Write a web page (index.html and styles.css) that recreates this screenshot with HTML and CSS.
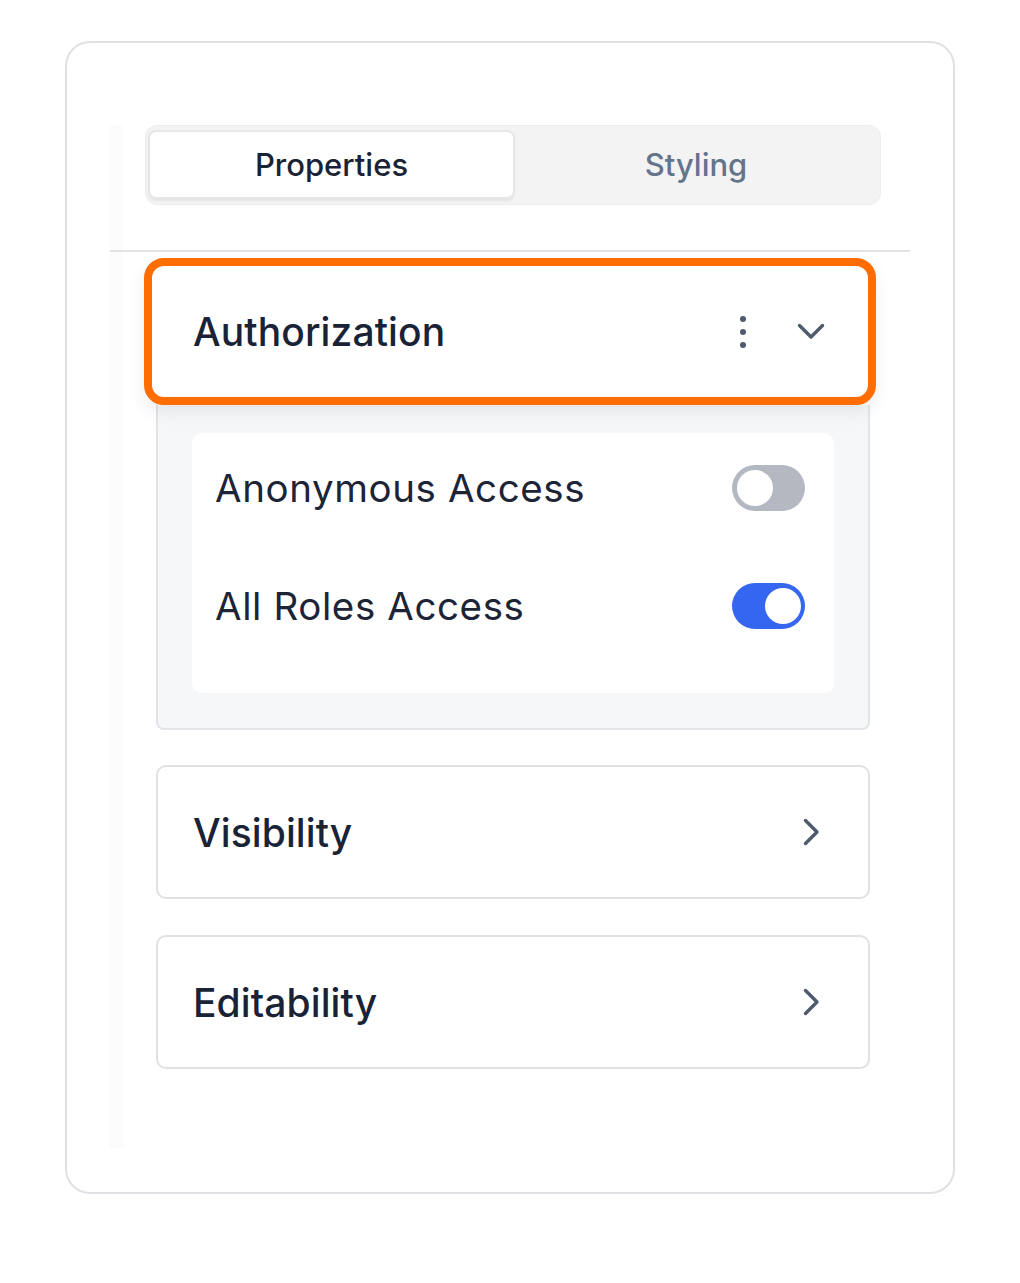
FILE: index.html
```html
<!DOCTYPE html>
<html>
<head>
<meta charset="utf-8">
<link rel="stylesheet" href="styles.css">
</head>
<body>
<div class="frame">
  <div class="panel">
    <div class="tabs">
      <div class="tab active">Properties</div>
      <div class="tab">Styling</div>
    </div>
    <div class="divider"></div>

    <div class="section-head focused">
      <span class="section-title">Authorization</span>
      <div class="head-icons">
        <svg class="kebab" width="24" height="34" viewBox="0 0 24 34"><circle cx="12" cy="4" r="3" fill="#4f5a6e"/><circle cx="12" cy="17" r="3" fill="#4f5a6e"/><circle cx="12" cy="30" r="3" fill="#4f5a6e"/></svg>
        <span class="icon-box"><svg width="28" height="17" viewBox="0 0 28 17"><path d="M2.5 2.5 L14 14 L25.5 2.5" fill="none" stroke="#4f5a6e" stroke-width="3.4" stroke-linecap="round" stroke-linejoin="round"/></svg></span>
      </div>
    </div>
    <div class="section-body">
      <div class="settings-card">
        <div class="setting-row">
          <span class="setting-label">Anonymous Access</span>
          <span class="toggle"><span class="knob"></span></span>
        </div>
        <div class="setting-row">
          <span class="setting-label">All Roles Access</span>
          <span class="toggle on"><span class="knob"></span></span>
        </div>
      </div>
    </div>

    <div class="section-card">
      <span class="section-title">Visibility</span>
      <span class="icon-box"><svg width="17" height="28" viewBox="0 0 17 28"><path d="M2.5 2.5 L14 14 L2.5 25.5" fill="none" stroke="#4f5a6e" stroke-width="3.4" stroke-linecap="round" stroke-linejoin="round"/></svg></span>
    </div>
    <div class="section-card">
      <span class="section-title">Editability</span>
      <span class="icon-box"><svg width="17" height="28" viewBox="0 0 17 28"><path d="M2.5 2.5 L14 14 L2.5 25.5" fill="none" stroke="#4f5a6e" stroke-width="3.4" stroke-linecap="round" stroke-linejoin="round"/></svg></span>
    </div>
  </div>
</div>
</body>
</html>
```

FILE: styles.css
```css
* { box-sizing: border-box; }
html, body { margin: 0; padding: 0; background: #ffffff; }
body {
  font-family: Inter, "Noto Sans", "Liberation Sans", sans-serif;
  color: #1a2236;
  width: 1020px;
  height: 1283px;
  overflow: hidden;
}
.frame {
  margin: 41px 0 0 65px;
  width: 890px;
  height: 1153px;
  border: 2px solid #e0e1e5;
  border-radius: 25px;
  padding: 82px 0 0 43px;
}
.panel {
  width: 800px;
  height: 1023px;
  background: linear-gradient(to right, #fbfbfc 0, #fcfcfd 12px, #ffffff 13px);
}
.tabs {
  margin-left: 35px;
  width: 736px;
  height: 80px;
  background: #f3f3f4;
  border: 1px solid #ededef;
  border-radius: 12px;
  padding: 4px 366px 5px 2px;
  display: flex;
}
.tab {
  flex: 1;
  display: flex;
  align-items: center;
  justify-content: center;
  font-size: 31px;
  font-weight: 500;
  color: #64748b;
}
.tab.active {
  flex: 0 0 367px;
  background: #ffffff;
  border: 2px solid #e6e6e8;
  border-radius: 8px;
  box-shadow: 0 2px 2px rgba(0,0,0,0.06);
  color: #1a2236;
}
.tab:not(.active) {
  flex: 0 0 362px;
  margin-right: -362px;
}
.divider {
  margin-top: 45px;
  height: 2px;
  background: #e1e3e7;
}
.section-head {
  position: relative;
  z-index: 1;
  margin: 6px 0 0 34px;
  width: 732px;
  height: 147px;
  border: 8px solid #ff6d00;
  border-radius: 20px;
  background: #ffffff;
  box-shadow: 0 8px 18px rgba(0,0,0,0.07);
  display: flex;
  align-items: center;
  justify-content: space-between;
  padding: 0 43px 0 41px;
}
.section-title {
  font-size: 39px;
  font-weight: 500;
  color: #1a2236;
  letter-spacing: 0.1px;
}
.head-icons {
  display: flex;
  align-items: center;
  gap: 42px;
}
.kebab { display: block; }
.icon-box {
  width: 28px;
  height: 28px;
  display: flex;
  align-items: center;
  justify-content: center;
}
.icon-box svg { display: block; }
.section-body {
  margin-left: 46px;
  width: 714px;
  height: 325px;
  background: #f6f7f9;
  border: 2px solid #e2e4e8;
  border-top: none;
  border-radius: 0 0 8px 8px;
  padding: 28px 34px 35px 34px;
}
.settings-card {
  background: #ffffff;
  border-radius: 10px;
  height: 260px;
  padding: 32px 29px 64px 23px;
  display: flex;
  flex-direction: column;
  gap: 72px;
}
.setting-row {
  height: 46px;
  display: flex;
  align-items: center;
  justify-content: space-between;
}
.setting-label {
  font-size: 38.5px;
  font-weight: 400;
  color: #1c2436;
  letter-spacing: 0.6px;
}
.toggle {
  position: relative;
  width: 73px;
  height: 46px;
  border-radius: 23px;
  background: #b3b8c1;
}
.toggle .knob {
  position: absolute;
  top: 5px;
  left: 5px;
  width: 36px;
  height: 36px;
  border-radius: 50%;
  background: #ffffff;
}
.toggle.on { background: #3566ef; }
.toggle.on .knob { left: 33px; }
.section-card {
  margin: 35px 0 0 46px;
  width: 714px;
  height: 134px;
  border: 2px solid #e0e1e5;
  border-radius: 10px;
  background: #ffffff;
  display: flex;
  align-items: center;
  justify-content: space-between;
  padding: 0 43px 0 35px;
}
.section-card + .section-card { margin-top: 36px; }
```
